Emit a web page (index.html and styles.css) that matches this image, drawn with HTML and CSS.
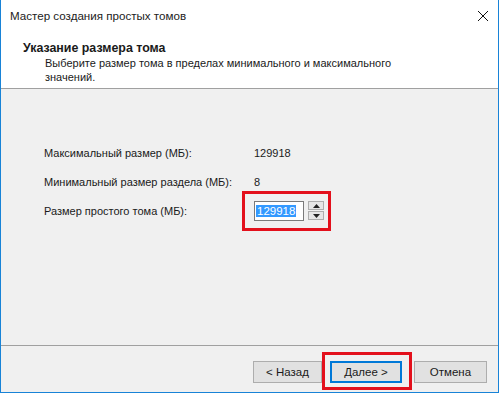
FILE: index.html
```html
<!DOCTYPE html>
<html lang="ru">
<head>
  <meta charset="UTF-8">
  <title>Мастер создания простых томов</title>
  <link rel="stylesheet" href="styles.css">
</head>
<body>
  <div class="window">
    <div class="titlebar">
      <span class="title">Мастер создания простых томов</span>
      <svg class="close" width="12" height="12" viewBox="0 0 12 12">
        <path d="M1 1 L11 11 M11 1 L1 11" stroke="#111" stroke-width="1" fill="none"/>
      </svg>
    </div>

    <div class="header">
      <div class="header-title">Указание размера тома</div>
      <div class="header-text">Выберите размер тома в пределах минимального и максимального<br>значений.</div>
    </div>

    <div class="content">
      <div class="fields">
        <span>Максимальный размер (МБ):</span>
        <span>129918</span>
        <span>Минимальный размер раздела (МБ):</span>
        <span>8</span>
        <span>Размер простого тома (МБ):</span>
        <span class="spin">
          <span class="spin-input"><span class="selected">129918</span></span>
          <span class="spin-buttons">
            <span class="spin-btn">
              <svg width="7" height="4" viewBox="0 0 7 4"><path d="M3.5 0 L7 4 L0 4 Z" fill="#222"/></svg>
            </span>
            <span class="spin-btn">
              <svg width="7" height="4" viewBox="0 0 7 4"><path d="M0 0 L7 0 L3.5 4 Z" fill="#222"/></svg>
            </span>
          </span>
        </span>
      </div>
    </div>

    <div class="footer">
      <button class="btn">&lt; Назад</button>
      <button class="btn btn-default">Далее &gt;</button>
      <button class="btn btn-cancel">Отмена</button>
    </div>
  </div>
</body>
</html>
```

FILE: styles.css
```css
body {
margin: 0;
font-family: "Liberation Sans", Arial, sans-serif;
font-size: 11px;
color: #1a1a1a;
}

.window {
width: 499px;
height: 393px;
box-sizing: border-box;
border: 1px solid #1883d7;
border-top: none;
display: flex;
flex-direction: column;
background-color: #f0f0f0;
}

.titlebar {
height: 31px;
background-color: white;
display: flex;
align-items: center;
justify-content: space-between;
padding: 0 9px 0 9px;
}

.title {
font-size: 11.6px;
color: #222;
}

.close {
display: block;
}

.header {
height: 58px;
background-color: white;
border-bottom: 1px solid #a0a0a0;
padding: 10px 0 0 22px;
box-sizing: border-box;
}

.header-title {
font-weight: bold;
font-size: 12.4px;
line-height: 15px;
}

.header-text {
margin-left: 22px;
line-height: 14px;
}

.content {
flex: 1;
border-bottom: 1px solid #a0a0a0;
padding: 49px 0 0 43px;
}

.fields {
display: grid;
grid-template-columns: 210px auto;
grid-auto-rows: 29px;
align-items: center;
white-space: nowrap;
}

.spin {
position: relative;
display: flex;
align-items: center;
width: 71px;
}

.spin::after {
content: "";
position: absolute;
left: -12px;
right: -6px;
top: -10px;
bottom: -10px;
border: 3px solid #e3101c;
}

.spin-input {
width: 50px;
height: 20px;
box-sizing: border-box;
border: 1px solid #7a7a7a;
background-color: white;
display: flex;
align-items: center;
padding-left: 1px;
}

.selected {
background-color: #3399ff;
color: white;
font-size: 11.5px;
line-height: 12px;
padding: 0 1px;
}

.spin-buttons {
margin-left: 4px;
display: flex;
flex-direction: column;
gap: 1px;
}

.spin-btn {
width: 16px;
height: 9px;
box-sizing: border-box;
border: 1px solid #adadad;
background-color: #e6e6e6;
display: flex;
align-items: center;
justify-content: center;
}

.spin-btn svg {
display: block;
}

.footer {
height: 46px;
box-sizing: border-box;
display: flex;
justify-content: flex-end;
align-items: flex-start;
padding: 15px 11px 0 0;
}

.btn {
font-family: inherit;
font-size: 11.5px;
color: #1a1a1a;
width: 69px;
height: 22px;
padding: 0;
border: 1px solid #adadad;
background-color: #e1e1e1;
}

.btn-default {
position: relative;
width: 72px;
margin-left: 8px;
border: 2px solid #0078d7;
}

.btn-default::after {
content: "";
position: absolute;
left: -10px;
right: -12px;
top: -11px;
bottom: -9px;
border: 3px solid #e3101c;
}

.btn-cancel {
width: 73px;
margin-left: 12px;
}
```
